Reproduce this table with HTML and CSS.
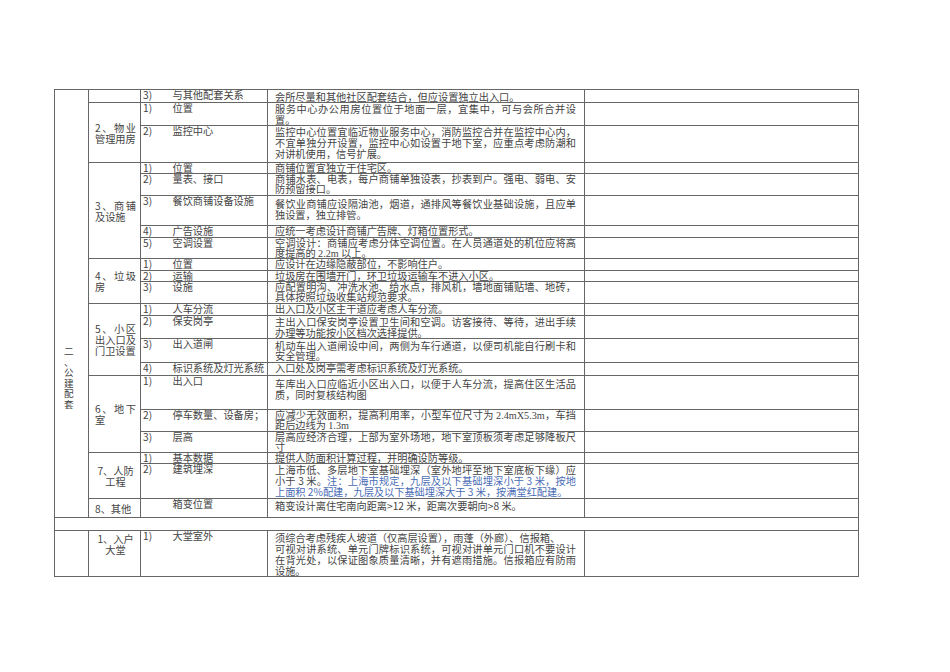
FILE: index.html
```html
<!DOCTYPE html>
<html lang="zh-CN">
<head>
<meta charset="utf-8">
<title>公建配套</title>
<link rel="stylesheet" href="styles.css">
</head>
<body>
<div class="sheet">
<table class="spec">
<colgroup>
<col class="c1"><col class="c2"><col class="c3"><col class="c4"><col class="c5"><col class="c6">
</colgroup>
<tbody>
<tr class="h13">
  <td class="sec" rowspan="21"><div class="vert"><span>二</span><span>、</span><span>公</span><span>建</span><span>配</span><span>套</span></div></td>
  <td class="grp"></td>
  <td class="num">3)</td><td class="name">与其他配套关系</td>
  <td class="txt pt">会所尽量和其他社区配套结合，但应设置独立出入口。</td><td></td>
</tr>
<tr class="h23">
  <td class="grp" rowspan="2">2、物业管理用房</td>
  <td class="num">1)</td><td class="name">位置</td>
  <td class="txt lh11">服务中心办公用房位置位于地面一层，宜集中，可与会所合并设置。</td><td></td>
</tr>
<tr class="h37">
  <td class="num">2)</td><td class="name">监控中心</td>
  <td class="txt lh11">监控中心位置宜临近物业服务中心，消防监控合并在监控中心内，不宜单独分开设置，监控中心如设置于地下室，应重点考虑防潮和对讲机使用，信号扩展。</td><td></td>
</tr>
<tr class="h11">
  <td class="grp" rowspan="5">3、商铺及设施</td>
  <td class="num">1)</td><td class="name">位置</td>
  <td class="txt">商铺位置宜独立于住宅区。</td><td></td>
</tr>
<tr class="h22">
  <td class="num">2)</td><td class="name">量表、接口</td>
  <td class="txt">商铺水表、电表，每户商铺单独设表，抄表到户。强电、弱电、安防预留接口。</td><td></td>
</tr>
<tr class="h30">
  <td class="num">3)</td><td class="name">餐饮商铺设备设施</td>
  <td class="txt pt lh11">餐饮业商铺应设隔油池，烟道，通排风等餐饮业基础设施，且应单独设置，独立排管。</td><td></td>
</tr>
<tr class="h12">
  <td class="num">4)</td><td class="name">广告设施</td>
  <td class="txt">应统一考虑设计商铺广告牌、灯箱位置形式。</td><td></td>
</tr>
<tr class="h21">
  <td class="num">5)</td><td class="name">空调设置</td>
  <td class="txt">空调设计：商铺应考虑分体空调位置。在人员通道处的机位应将高度提高的 <span class="lat">2.2m</span> 以上。</td><td></td>
</tr>
<tr class="h12">
  <td class="grp" rowspan="3">4、垃圾房</td>
  <td class="num">1)</td><td class="name">位置</td>
  <td class="txt">应设计在边缘隐蔽部位，不影响住户。</td><td></td>
</tr>
<tr class="h11">
  <td class="num">2)</td><td class="name">运输</td>
  <td class="txt">垃圾房在围墙开门，环卫垃圾运输车不进入小区。</td><td></td>
</tr>
<tr class="h22">
  <td class="num">3)</td><td class="name">设施</td>
  <td class="txt">应配置明沟、冲洗水池、给水点，排风机，墙地面铺贴墙、地砖，具体按照垃圾收集站规范要求。</td><td></td>
</tr>
<tr class="h12">
  <td class="grp" rowspan="4">5、小区出入口及门卫设置</td>
  <td class="num">1)</td><td class="name">人车分流</td>
  <td class="txt">出入口及小区主干道应考虑人车分流。</td><td></td>
</tr>
<tr class="h23">
  <td class="num">2)</td><td class="name">保安岗亭</td>
  <td class="txt lh11">主出入口保安岗亭设置卫生间和空调。访客接待、等待，进出手续办理等功能按小区档次选择提供。</td><td></td>
</tr>
<tr class="h24">
  <td class="num">3)</td><td class="name">出入道闸</td>
  <td class="txt pt">机动车出入道闸设中间，两侧为车行通道，以便司机能自行刷卡和安全管理。</td><td></td>
</tr>
<tr class="h13">
  <td class="num">4)</td><td class="name">标识系统及灯光系统</td>
  <td class="txt">入口处及岗亭需考虑标识系统及灯光系统。</td><td></td>
</tr>
<tr class="h34">
  <td class="grp" rowspan="3">6、地下室</td>
  <td class="num">1)</td><td class="name">出入口</td>
  <td class="txt pt lh11">车库出入口应临近小区出入口，以便于人车分流，提高住区生活品质，同时复核结构图</td><td></td>
</tr>
<tr class="h22">
  <td class="num">2)</td><td class="name">停车数量、设备房；</td>
  <td class="txt">应减少无效面积，提高利用率，小型车位尺寸为 <span class="lat">2.4mX5.3m</span>，车挡距后边线为 <span class="lat">1.3m</span></td><td></td>
</tr>
<tr class="h21">
  <td class="num">3)</td><td class="name">层高</td>
  <td class="txt">层高应经济合理，上部为室外场地，地下室顶板须考虑足够降板尺寸</td><td></td>
</tr>
<tr class="h11">
  <td class="grp ctr" rowspan="2">7、人防工程</td>
  <td class="num">1)</td><td class="name">基本数据</td>
  <td class="txt">提供人防面积计算过程，并明确设防等级。</td><td></td>
</tr>
<tr class="h35">
  <td class="num">2)</td><td class="name">建筑埋深</td>
  <td class="txt lh11">上海市低、多层地下室基础埋深（室外地坪至地下室底板下缘）应小于 3 米。<span class="note">注：上海市规定，九层及以下基础埋深小于 3 米，按地上面积 2%配建，九层及以下基础埋深大于 3 米，按满堂红配建。</span></td><td></td>
</tr>
<tr class="h19">
  <td class="grp">8、其他</td>
  <td class="num"></td><td class="name">箱变位置</td>
  <td class="txt pt">箱变设计离住宅南向距离&gt;12 米，距离次要朝向&gt;8 米。</td><td></td>
</tr>
<tr class="h13">
  <td colspan="6"></td>
</tr>
<tr class="h46">
  <td></td>
  <td class="grp ctr top">1、入户大堂</td>
  <td class="num">1)</td><td class="name">大堂室外</td>
  <td class="txt pt1 lh11">须综合考虑残疾人坡道（仅高层设置），雨蓬（外廊）、信报箱、<br>可视对讲系统、单元门牌标识系统，可视对讲单元门口机不要设计在背光处，以保证图象质量清晰，并有遮雨措施。信报箱应有防雨设施。</td><td></td>
</tr>
</tbody>
</table>
</div>
</body>
</html>
```
FILE: styles.css
```css
html, body {
  margin: 0;
  padding: 0;
  background: #ffffff;
}
body {
  font-family: "Noto Sans CJK SC", "Liberation Serif", sans-serif;
  font-size: 10.2px;
  line-height: 10px;
  color: #444444;
}
.sheet {
  padding: 89px 0 0 54px;
}
.spec {
  border-collapse: collapse;
  table-layout: fixed;
  width: 804px;
}
.c1 { width: 34px; }
.c2 { width: 52px; }
.c3 { width: 26px; }
.c4 { width: 101px; }
.c5 { width: 317px; }
.c6 { width: 274px; }

.spec td {
  border: 1px solid #666666;
  padding: 0;
  vertical-align: top;
}
.h11 { height: 11px; }
.h12 { height: 12px; }
.h13 { height: 13px; }
.h19 { height: 19px; }
.h21 { height: 21px; }
.h22 { height: 22px; }
.h23 { height: 23px; }
.h24 { height: 24px; }
.h30 { height: 30px; }
.h34 { height: 34px; }
.h35 { height: 35px; }
.h37 { height: 37px; }
.h46 { height: 46px; }

.spec td.sec {
  padding: 256px 0 0 9px;
}
.vert span {
  display: block;
  font-size: 9.6px;
  line-height: 10.5px;
}
.spec td.grp {
  padding: 0 4px 0 6px;
  text-align: justify;
  vertical-align: middle;
  line-height: 11px;
}
.spec td.grp.ctr {
  text-align: center;
}
.spec td.grp.top {
  vertical-align: top;
  padding-top: 2px;
}
.spec td.num {
  padding-left: 2px;
  border-right-style: none;
}
.spec td.name {
  padding-left: 6px;
  border-left-style: none;
  white-space: nowrap;
}
.spec td.txt {
  padding: 0 8px 0 7px;
  text-align: justify;
}
.spec td.pt {
  padding-top: 2px;
}
.spec td.pt1 {
  padding-top: 1px;
}
.spec td.lh11 {
  line-height: 11px;
}
.lat {
  font-family: "Liberation Serif", serif;
  line-height: 8px;
}
.note {
  color: #4a6cb5;
}
```
